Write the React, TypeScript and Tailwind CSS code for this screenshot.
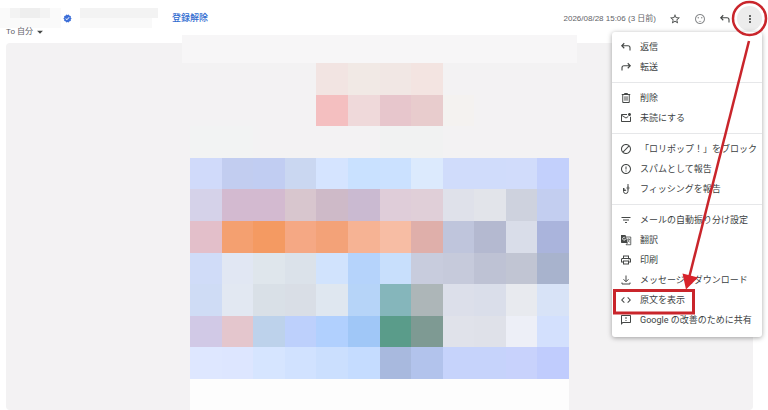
import type { ReactNode } from 'react';
import {
  MdStarBorder,
  MdSentimentSatisfied,
  MdMoreVert,
  MdBlock,
  MdErrorOutline,
  MdFilterList,
  MdOutlinePrint,
  MdCode,
  MdOutlineFeedback,
  MdVerified,
  MdArrowDropDown,
  MdOutlineMarkEmailUnread,
} from 'react-icons/md';

function ReplyIcon({ flip = false }: { flip?: boolean }) {
  return (
    <svg
      viewBox="0 0 24 24"
      className={flip ? 'size-3 -scale-x-100' : 'size-3'}
      fill="none"
      stroke="currentColor"
      strokeWidth="2.2"
      aria-hidden="true"
    >
      <path d="M8.5 4.5 3.5 9.5l5 5M4 9.5h12a4 4 0 0 1 4 4V19" />
    </svg>
  );
}

function TrashIcon() {
  return (
    <svg viewBox="0 0 24 24" className="size-3" fill="none" stroke="currentColor" strokeWidth="2" aria-hidden="true">
      <path d="M3.500 5h17M9 5V3h6V5M5.500 5v16h13V5M10 8.500v9M14 8.500v9" />
    </svg>
  );
}

function HookIcon() {
  return (
    <svg viewBox="0 0 24 24" className="size-3" fill="none" stroke="currentColor" strokeWidth="2" aria-hidden="true">
      <path d="M16 2v6M16 12v4.500a4.500 4.500 0 0 1-9 0V10l4.500 5H7" />
      <circle cx="16" cy="10" r="2" />
    </svg>
  );
}

function TranslateIcon() {
  return (
    <svg viewBox="0 0 24 24" className="size-3" fill="none" stroke="currentColor" aria-hidden="true">
      <path d="M2 2h9l4.500 16H3.500A1.500 1.500 0 0 1 2 16.500Z" fill="currentColor" stroke="none" />
      <path d="M10.500 7.500a3 3 0 1 0 .5 3H8.500" stroke="#ffffff" strokeWidth="1.500" />
      <path d="M12 6h9.500v15.500H12l3-3.500" strokeWidth="1.600" />
      <path d="M14 10.500h6M17 9v1.500M19 10.500c-.5 2.500-2 4-3.500 5M15 12l4.500 5" strokeWidth="1.400" />
    </svg>
  );
}

function DownloadIcon() {
  return (
    <svg viewBox="0 0 24 24" className="size-3" fill="none" stroke="currentColor" strokeWidth="2" aria-hidden="true">
      <path d="M12 3v12M7 10.500l5 5 5-5M4 17v3h16v-3" />
    </svg>
  );
}

// Blurred message body, one array per row of tiles.
const mosaic: string[][] = [
  ['', '', '', '', 'bg-[#f2e4e2]', 'bg-[#f1e9e5]', 'bg-[#f1e7e4]', 'bg-[#f3e4e1]', '', '', '', ''],
  ['', '', '', '', 'bg-[#f4bfc0]', 'bg-[#efd9da]', 'bg-[#e7c6cc]', 'bg-[#e8cccd]', 'bg-[#f4f2f0]', '', '', ''],
  ['bg-[#f2f3f3]', 'bg-[#f2f3f3]', '', '', '', '', 'bg-[#f1f2f2]', 'bg-[#f1f2f2]', '', '', '', ''],
  ['bg-[#d0dafa]', 'bg-[#c2cdf0]', 'bg-[#c1cdf2]', 'bg-[#cad7f1]', 'bg-[#d5e4ff]', 'bg-[#c9e1ff]', 'bg-[#cbe1ff]', 'bg-[#dceafd]', 'bg-[#d0dcfb]', 'bg-[#d0dcfb]', 'bg-[#d1dcfb]', 'bg-[#c3d0fc]'],
  ['bg-[#d5d2e9]', 'bg-[#d3bad0]', 'bg-[#d3bad0]', 'bg-[#d8c6ce]', 'bg-[#cebac8]', 'bg-[#cabad1]', 'bg-[#dfcdd9]', 'bg-[#e0cfd8]', 'bg-[#dfe1ea]', 'bg-[#e2e4ea]', 'bg-[#ced2de]', 'bg-[#c3cef0]'],
  ['bg-[#e3bfca]', 'bg-[#f4a070]', 'bg-[#f49a62]', 'bg-[#f5a884]', 'bg-[#f3a278]', 'bg-[#f6b394]', 'bg-[#f7bda4]', 'bg-[#dfafaa]', 'bg-[#bfc5dc]', 'bg-[#b4b9d0]', 'bg-[#d9dde9]', 'bg-[#aab4dc]'],
  ['bg-[#d0dcf8]', 'bg-[#e1e7f3]', 'bg-[#dfe6ec]', 'bg-[#dbe2ea]', 'bg-[#d1e3fd]', 'bg-[#b5d3fb]', 'bg-[#c8dffc]', 'bg-[#c8ccdd]', 'bg-[#c6cadb]', 'bg-[#bec2d4]', 'bg-[#c1c5d3]', 'bg-[#a8b3cd]'],
  ['bg-[#cfdcf5]', 'bg-[#e2e8f2]', 'bg-[#d9e0e7]', 'bg-[#d9dee6]', 'bg-[#dfe7f0]', 'bg-[#b6d4f8]', 'bg-[#85b6bb]', 'bg-[#adb6b8]', 'bg-[#dcdfea]', 'bg-[#dadeea]', 'bg-[#e8eaef]', 'bg-[#d8e3f7]'],
  ['bg-[#d1c9e6]', 'bg-[#e4c6cd]', 'bg-[#bdd2eb]', 'bg-[#bdd0fc]', 'bg-[#b1d0fe]', 'bg-[#a0c7f7]', 'bg-[#5a9c8a]', 'bg-[#7e9a93]', 'bg-[#e0e2ea]', 'bg-[#dfe1e9]', 'bg-[#edeff7]', 'bg-[#d3e0fd]'],
  ['bg-[#dee7ff]', 'bg-[#dde6ff]', 'bg-[#d6e5ff]', 'bg-[#d1e2ff]', 'bg-[#cbdffe]', 'bg-[#c5dcff]', 'bg-[#a8b9de]', 'bg-[#b2c3ec]', 'bg-[#c6d3fb]', 'bg-[#c6d3fb]', 'bg-[#c8d2fc]', 'bg-[#c0ccfd]'],
];

type Item = { icon: ReactNode; label: string };

const groups: Item[][] = [
  [
    { icon: <ReplyIcon />, label: '返信' },
    { icon: <ReplyIcon flip />, label: '転送' },
  ],
  [
    { icon: <TrashIcon />, label: '削除' },
    { icon: <MdOutlineMarkEmailUnread className="size-3" />, label: '未読にする' },
  ],
  [
    { icon: <MdBlock className="size-3" />, label: '「ロリポップ！」をブロック' },
    { icon: <MdErrorOutline className="size-3" />, label: 'スパムとして報告' },
    { icon: <HookIcon />, label: 'フィッシングを報告' },
  ],
  [
    { icon: <MdFilterList className="size-3" />, label: 'メールの自動振り分け設定' },
    { icon: <TranslateIcon />, label: '翻訳' },
    { icon: <MdOutlinePrint className="size-3" />, label: '印刷' },
    { icon: <DownloadIcon />, label: 'メッセージをダウンロード' },
    { icon: <MdCode className="size-3" />, label: '原文を表示' },
    { icon: <MdOutlineFeedback className="size-3" />, label: 'Google の改善のために共有' },
  ],
];

function Menu() {
  return (
    <div
      role="menu"
      className="absolute top-8 right-1.5 w-[150px] rounded-[3px] bg-white pt-[5px] pb-[7px] shadow-[0_1px_5px_rgba(0,0,0,0.35)]"
    >
      {groups.map((group, i) => (
        <div key={i} role="group" className={i > 0 ? 'mt-[5px] border-t border-[#e6e7e9] pt-[5px]' : ''}>
          {group.map((item) => (
            <button
              key={item.label}
              type="button"
              role="menuitem"
              className="flex h-5 w-full items-center gap-2 pl-2 text-[9px] leading-5 whitespace-nowrap text-[#3c3f43]"
            >
              <span className="text-[#444746]">{item.icon}</span>
              {item.label}
            </button>
          ))}
        </div>
      ))}
    </div>
  );
}

function Annotation() {
  return (
    <svg
      viewBox="0 0 168 330"
      className="pointer-events-none absolute top-0 right-0 h-[330px] w-[168px]"
      fill="none"
      stroke="#c9252b"
      aria-hidden="true"
    >
      <circle cx="149.5" cy="18.5" r="16.5" strokeWidth="2.5" />
      <path d="M149 41 89.500 276" strokeWidth="2.5" />
      <path d="M82.500 273.500 98 277.500 86 289.500Z" fill="#d8232a" stroke="none" />
      <rect x="14.500" y="290.500" width="79" height="22.500" strokeWidth="3" />
    </svg>
  );
}

export default function App() {
  return (
    <div className="relative flex min-h-screen flex-col overflow-hidden bg-white font-[Roboto,'Noto_Sans_CJK_JP',sans-serif] text-[#5f6368]">
      <header className="flex h-[43px] items-start justify-between pr-1.5">
        <div className="flex flex-col">
          <div className="flex h-[26px] items-center pt-2.5">
            <div className="flex h-5 w-[61px] items-start bg-[#fafafa]">
              <div className="ml-2.5 h-2.5 w-2.5 bg-[#f3f3f3]" />
              <div className="h-2.5 w-5 bg-[#eeeeee]" />
              <div className="h-2.5 w-2.5 bg-[#f3f3f3]" />
            </div>
            <MdVerified className="ml-0.5 size-[9px] text-[#3d6fd8]" />
            <div className="ml-2 flex h-5 w-[82px] flex-col items-start">
              <div className="h-2.5 w-[78px] bg-[#f3f3f3]" />
              <div className="h-2.5 w-[72px] bg-[#f9f9f9]" />
            </div>
            <a href="#unsubscribe" className="ml-2.5 text-[9px] leading-4 font-medium text-[#2f6bd0]">
              登録解除
            </a>
          </div>
          <button type="button" className="flex h-3 items-center self-start pl-1.5 text-[8px] leading-3">
            To 自分
            <MdArrowDropDown className="size-3.5 text-[#444746]" />
          </button>
        </div>
        <div className="flex h-[37px] items-center text-[#444746]">
          <time className="mr-1.5 font-['Liberation_Sans','Noto_Sans_CJK_JP',sans-serif] text-[8px] leading-4 text-[#5f6368]">
            2026/08/28 15:06 (3 日前)
          </time>
          <button type="button" aria-label="スター" className="flex w-[25px] justify-center">
            <MdStarBorder className="size-3" />
          </button>
          <button type="button" aria-label="リアクション" className="flex w-[25px] justify-center text-[#8a8c8e]">
            <MdSentimentSatisfied className="size-3" />
          </button>
          <button type="button" aria-label="返信" className="flex w-[25px] justify-center">
            <ReplyIcon />
          </button>
          <button
            type="button"
            aria-label="その他"
            className="flex size-[25px] items-center justify-center rounded-full bg-[#ececec]"
          >
            <MdMoreVert className="size-3" />
          </button>
        </div>
      </header>
      <main className="mr-[15px] ml-1.5 flex flex-1 flex-col items-center rounded-sm bg-[#f3f2f3]">
        <div className="-mt-2 h-7 w-[395px] bg-[#f7f6f7]" />
        <div className="grid h-[316px] w-[379px] grid-cols-12 grid-rows-10">
          {mosaic.flatMap((row, r) => row.map((tile, c) => <div key={`${r}-${c}`} className={tile} />))}
        </div>
        <div className="w-[379px] flex-1 bg-[#fdfdfd]" />
      </main>
      <Menu />
      <Annotation />
    </div>
  );
}
